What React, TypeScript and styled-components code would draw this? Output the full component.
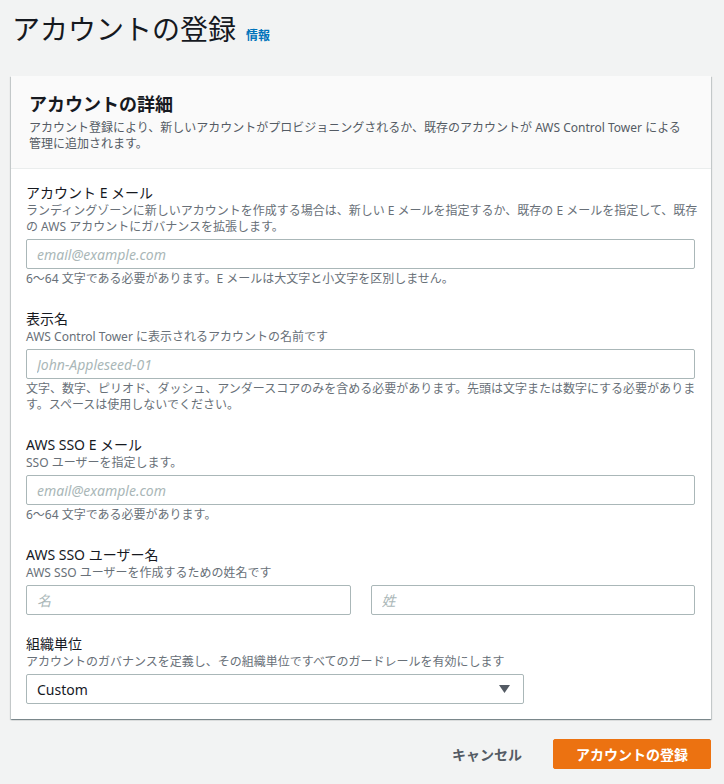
import React, { FC } from 'react';
import styled, { createGlobalStyle } from 'styled-components';

const GlobalStyle = createGlobalStyle`
  html, body {
    margin: 0;
    padding: 0;
    background: #f2f3f3;
  }
  body {
    font-family: "Noto Sans", "Noto Sans CJK JP", sans-serif;
    color: #16191f;
  }
  * {
    box-sizing: border-box;
  }
`;

const Page = styled.div`
  display: flex;
  flex-direction: column;
  padding: 10px 13px 14px 11px;
  min-height: 784px;
`;

const TitleRow = styled.div`
  display: flex;
  align-items: baseline;
  gap: 10px;
  padding-left: 1px;
`;

const Title = styled.h1`
  margin: 0;
  font-size: 28px;
  line-height: 38px;
  font-weight: 400;
  color: #16191f;
`;

const InfoLink = styled.a`
  font-size: 12px;
  font-weight: 700;
  color: #0073bb;
  text-decoration: none;
`;

const Card = styled.section`
  margin-top: 28px;
  background: #ffffff;
  box-shadow: 0 1px 1px 0 rgba(0, 28, 36, 0.3), 1px 1px 1px 0 rgba(0, 28, 36, 0.15),
    -1px 1px 1px 0 rgba(0, 28, 36, 0.15);
`;

const CardHeader = styled.header`
  padding: 16px 20px 16px 18px;
  background: #fafafa;
  border-bottom: 1px solid #eaeded;
`;

const CardTitle = styled.h2`
  margin: 0;
  font-size: 18px;
  line-height: 24px;
  font-weight: 700;
`;

const CardDescription = styled.p`
  margin: 4px 0 0;
  font-size: 12px;
  line-height: 16px;
  color: #545b64;
`;

const CardBody = styled.div`
  display: flex;
  flex-direction: column;
  gap: 19px;
  padding: 14px 12px 15px 15px;
`;

const Field = styled.div`
  display: flex;
  flex-direction: column;
`;

const Label = styled.label`
  font-size: 14px;
  line-height: 20px;
  color: #16191f;
`;

const Description = styled.div`
  font-size: 12px;
  line-height: 16px;
  color: #687078;
`;

const Constraint = styled.div`
  margin: 2px 0 3px;
  font-size: 12px;
  line-height: 16px;
  color: #687078;
`;

const Input = styled.input`
  display: block;
  width: 100%;
  height: 30px;
  margin-top: 4px;
  padding: 4px 10px;
  font-family: inherit;
  font-size: 14px;
  color: #16191f;
  background: #ffffff;
  border: 1px solid #aab7b8;
  border-radius: 2px;
  outline: none;

  &::placeholder {
    color: #aab7b8;
    font-style: italic;
  }
`;

const InputWrap = styled.div`
  padding-right: 4px;
`;

const NameRow = styled.div`
  display: grid;
  grid-template-columns: 1fr 1fr;
  gap: 20px;
  padding-right: 4px;
`;

const SelectBox = styled.div`
  display: flex;
  align-items: center;
  justify-content: space-between;
  width: 498px;
  height: 30px;
  margin-top: 4px;
  padding: 0 13px 0 10px;
  font-size: 14px;
  color: #16191f;
  background: #ffffff;
  border: 1px solid #aab7b8;
  border-radius: 2px;
`;

const Caret = styled.svg`
  width: 11px;
  height: 8px;
  fill: #545b64;
`;

const Actions = styled.div`
  display: flex;
  justify-content: flex-end;
  align-items: center;
  gap: 10px;
  margin-top: 20px;
`;

const Button = styled.button<{ $primary?: boolean }>`
  height: 30px;
  padding: 0 ${(p) => (p.$primary ? '22px' : '20px')};
  font-family: inherit;
  font-size: 14px;
  font-weight: 700;
  border-radius: 2px;
  border: 1px solid ${(p) => (p.$primary ? '#ec7211' : 'transparent')};
  background: ${(p) => (p.$primary ? '#ec7211' : 'transparent')};
  color: ${(p) => (p.$primary ? '#ffffff' : '#545b64')};
  cursor: pointer;
`;

const App: FC = () => {
  return (
    <>
      <GlobalStyle />
      <Page>
        <TitleRow>
          <Title>アカウントの登録</Title>
          <InfoLink href="#">情報</InfoLink>
        </TitleRow>
        <Card>
          <CardHeader>
            <CardTitle>アカウントの詳細</CardTitle>
            <CardDescription>
              アカウント登録により、新しいアカウントがプロビジョニングされるか、既存のアカウントが AWS Control Tower による管理に追加されます。
            </CardDescription>
          </CardHeader>
          <CardBody>
            <Field>
              <Label>アカウント E メール</Label>
              <Description>
                ランディングゾーンに新しいアカウントを作成する場合は、新しい E メールを指定するか、既存の E メールを指定して、既存の AWS アカウントにガバナンスを拡張します。
              </Description>
              <InputWrap>
                <Input placeholder="email@example.com" />
              </InputWrap>
              <Constraint>6〜64 文字である必要があります。E メールは大文字と小文字を区別しません。</Constraint>
            </Field>
            <Field>
              <Label>表示名</Label>
              <Description>AWS Control Tower に表示されるアカウントの名前です</Description>
              <InputWrap>
                <Input placeholder="John-Appleseed-01" />
              </InputWrap>
              <Constraint>
                文字、数字、ピリオド、ダッシュ、アンダースコアのみを含める必要があります。先頭は文字または数字にする必要があります。スペースは使用しないでください。
              </Constraint>
            </Field>
            <Field>
              <Label>AWS SSO E メール</Label>
              <Description>SSO ユーザーを指定します。</Description>
              <InputWrap>
                <Input placeholder="email@example.com" />
              </InputWrap>
              <Constraint>6〜64 文字である必要があります。</Constraint>
            </Field>
            <Field>
              <Label>AWS SSO ユーザー名</Label>
              <Description>AWS SSO ユーザーを作成するための姓名です</Description>
              <NameRow>
                <Input placeholder="名" />
                <Input placeholder="姓" />
              </NameRow>
            </Field>
            <Field>
              <Label>組織単位</Label>
              <Description>アカウントのガバナンスを定義し、その組織単位ですべてのガードレールを有効にします</Description>
              <SelectBox>
                <span>Custom</span>
                <Caret viewBox="0 0 11 8">
                  <path d="M0 0 H11 L5.5 8 Z" />
                </Caret>
              </SelectBox>
            </Field>
          </CardBody>
        </Card>
        <Actions>
          <Button>キャンセル</Button>
          <Button $primary>アカウントの登録</Button>
        </Actions>
      </Page>
    </>
  );
};

export default App;
